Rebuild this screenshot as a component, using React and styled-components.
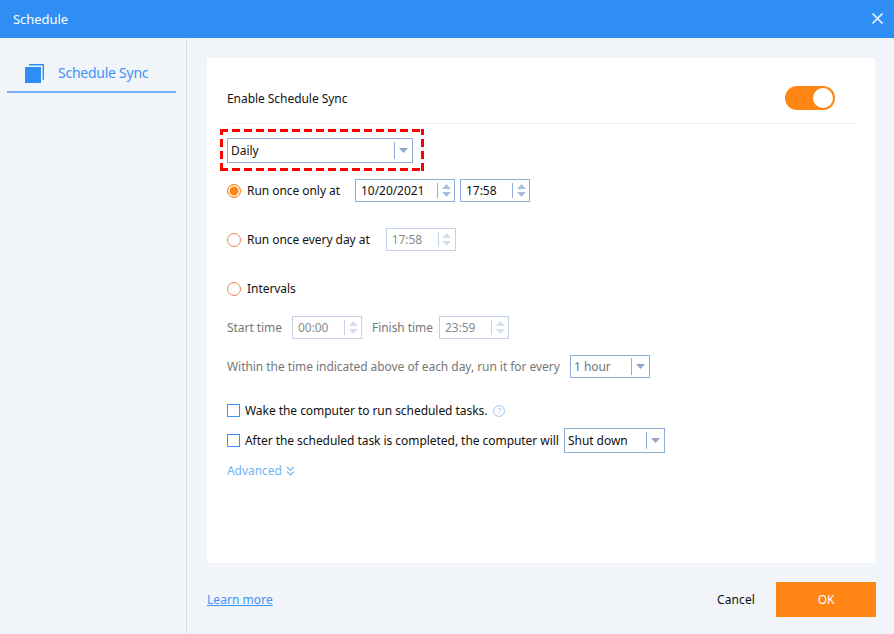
import React from "react";
import styled, { createGlobalStyle } from "styled-components";

const GlobalStyle = createGlobalStyle`
  html, body { margin: 0; padding: 0; background: #f1f4f9; }
  body { font-family: "Noto Sans", "Liberation Sans", sans-serif; font-size: 12px; letter-spacing: -0.05px; color: #111; }
`;

const Spin = ({ disabled }) => (
  <SpinBox $disabled={disabled}>
    <svg width="9" height="5" viewBox="0 0 9 5"><path d="M4.5 0L9 5H0z" fill="currentColor" /></svg>
    <svg width="9" height="5" viewBox="0 0 9 5"><path d="M0 0h9L4.5 5z" fill="currentColor" /></svg>
  </SpinBox>
);

const TimeInput = ({ value, width, disabled }) => (
  <InputBox $width={width} $disabled={disabled}>
    <InputValue>{value}</InputValue>
    <Spin disabled={disabled} />
  </InputBox>
);

const Select = ({ value, width, height }) => (
  <SelectBox $width={width} $height={height}>
    <InputValue>{value}</InputValue>
    <SelectArrow>
      <svg width="9" height="5" viewBox="0 0 9 5"><path d="M0 0h9L4.5 5z" fill="currentColor" /></svg>
    </SelectArrow>
  </SelectBox>
);

export default function App() {
  return (
    <>
      <GlobalStyle />
      <Window>
        <TitleBar>
          <Title>Schedule</Title>
          <svg width="11" height="11" viewBox="0 0 11 11">
            <path d="M0.5 0.5l10 10M10.5 0.5l-10 10" stroke="#d6ebff" strokeWidth="1.8" fill="none" />
          </svg>
        </TitleBar>
        <Body>
          <Sidebar>
            <Tab>
              <TabIcon width="19" height="19" viewBox="0 0 19 19">
                <path d="M4 0.7h14.3v15" stroke="#2f8ef4" strokeWidth="1.4" fill="none" />
                <rect x="0" y="3" width="16" height="16" fill="#2f8ef4" />
              </TabIcon>
              <TabLabel>Schedule Sync</TabLabel>
            </Tab>
          </Sidebar>
          <Main>
            <Panel>
              <EnableRow>
                <span>Enable Schedule Sync</span>
                <Toggle />
              </EnableRow>
              <Highlight>
                <Select value="Daily" width={186} height={25} />
              </Highlight>
              <RadioRow $mt={8}>
                <Radio $checked />
                <RadioLabel $mr={10}>Run once only at</RadioLabel>
                <TimeInput value="10/20/2021" width={100} />
                <TimeInput value="17:58" width={70} />
              </RadioRow>
              <RadioRow $mt={26}>
                <Radio />
                <RadioLabel $mr={11}>Run once every day at</RadioLabel>
                <TimeInput value="17:58" width={70} disabled />
              </RadioRow>
              <RadioRow $mt={26}>
                <Radio />
                <RadioLabel $mr={0}>Intervals</RadioLabel>
              </RadioRow>
              <MutedRow $mt={16}>
                <FixedLabel $width={55}>Start time</FixedLabel>
                <TimeInput value="00:00" width={70} disabled />
                <FixedLabel $width={57}>Finish time</FixedLabel>
                <TimeInput value="23:59" width={70} disabled />
              </MutedRow>
              <MutedRow $mt={16}>
                <FixedLabel $width={333}>Within the time indicated above of each day, run it for every</FixedLabel>
                <Select value="1 hour" width={80} height={23} />
              </MutedRow>
              <CheckRow $mt={20}>
                <Checkbox />
                <span>Wake the computer to run scheduled tasks.</span>
                <svg width="12" height="12" viewBox="0 0 12 12">
                  <circle cx="6" cy="6" r="5.4" stroke="#9fc6f0" fill="none" />
                  <text x="6" y="9" fontSize="8.5" textAnchor="middle" fill="#9fc6f0" fontFamily="Liberation Sans">?</text>
                </svg>
              </CheckRow>
              <CheckRow $mt={5}>
                <Checkbox />
                <FixedLabel $width={313}>After the scheduled task is completed, the computer will</FixedLabel>
                <Select value="Shut down" width={101} height={25} />
              </CheckRow>
              <Advanced>
                Advanced
                <svg width="9" height="10" viewBox="0 0 9 10">
                  <path d="M1 1l3.5 3.5L8 1M1 5.5L4.5 9 8 5.5" stroke="#75b2f6" strokeWidth="1.1" fill="none" />
                </svg>
              </Advanced>
            </Panel>
            <Footer>
              <LearnMore>Learn more</LearnMore>
              <Actions>
                <Cancel>Cancel</Cancel>
                <OkButton>OK</OkButton>
              </Actions>
            </Footer>
          </Main>
        </Body>
      </Window>
    </>
  );
}

const Window = styled.div`
  width: 894px;
  height: 634px;
  display: flex;
  flex-direction: column;
  overflow: hidden;
`;

const TitleBar = styled.div`
  height: 38px;
  box-sizing: border-box;
  background: #2f8ef4;
  display: flex;
  align-items: center;
  justify-content: space-between;
  padding: 0 11px 1px 13px;
  flex: none;
`;

const Title = styled.div`
  color: #fff;
  font-size: 13px;
`;

const Body = styled.div`
  flex: 1;
  display: flex;
`;

const Sidebar = styled.div`
  width: 169px;
  border-right: 1px solid #d9dde3;
  padding: 16px 10px 0 7px;
`;

const Tab = styled.div`
  height: 37px;
  border-bottom: 2px solid #75b0f5;
  display: flex;
  align-items: center;
  gap: 14px;
  padding-left: 18px;
`;

const TabIcon = styled.svg`
  margin-top: 2px;
  flex: none;
`;

const TabLabel = styled.span`
  color: #3f93f4;
  font-size: 14px;
  letter-spacing: -0.25px;
`;

const Main = styled.div`
  flex: 1;
  padding: 20px 18px 0 20px;
  display: flex;
  flex-direction: column;
`;

const Panel = styled.div`
  height: 505px;
  width: 668px;
  background: #fff;
  padding: 0 20px;
  box-sizing: border-box;
  display: flex;
  flex-direction: column;
  align-items: flex-start;
`;

const EnableRow = styled.div`
  align-self: stretch;
  height: 66px;
  flex: none;
  box-sizing: border-box;
  border-bottom: 1px solid #f1f2f4;
  display: flex;
  align-items: center;
  justify-content: space-between;
  padding: 15px 21px 0 0;
  margin-right: -1px;
`;

const Toggle = styled.div`
  width: 50px;
  height: 24px;
  border-radius: 12px;
  background: #ff8514;
  position: relative;
  &::after {
    content: "";
    position: absolute;
    right: 2px;
    top: 2px;
    width: 20px;
    height: 20px;
    border-radius: 50%;
    background: #fff;
  }
`;

const Highlight = styled.div`
  margin: 5px 0 0 -7px;
  padding: 9px 11px 8px 7px;
  background-color: #fff;
  background-image:
    repeating-linear-gradient(90deg, #f00 0 8px, transparent 8px 12px),
    repeating-linear-gradient(90deg, #f00 0 8px, transparent 8px 12px),
    repeating-linear-gradient(0deg, #f00 0 8px, transparent 8px 12px),
    repeating-linear-gradient(0deg, #f00 0 8px, transparent 8px 12px);
  background-size: 100% 3px, 100% 3px, 3px 100%, 3px 100%;
  background-position: 0 0, 0 100%, 0 0, 100% 0;
  background-repeat: no-repeat;
`;

const InputValue = styled.span`
  flex: 1;
  white-space: nowrap;
`;

const SelectBox = styled.div`
  width: ${(p) => p.$width}px;
  height: ${(p) => p.$height}px;
  box-sizing: border-box;
  border: 1px solid #8facd8;
  background: #fff;
  display: flex;
  align-items: center;
  padding-left: 3px;
`;

const SelectArrow = styled.div`
  width: 17px;
  height: 17px;
  border-left: 1px solid #8facd8;
  display: flex;
  align-items: center;
  justify-content: center;
  color: #8ea6cc;
`;

const InputBox = styled.div`
  width: ${(p) => p.$width}px;
  height: 23px;
  box-sizing: border-box;
  border: 1px solid ${(p) => (p.$disabled ? "#c3d2ea" : "#8facd8")};
  color: ${(p) => (p.$disabled ? "#8b8b8b" : "#111")};
  display: flex;
  align-items: center;
  padding-left: 5px;
`;

const SpinBox = styled.div`
  width: 16px;
  height: 15px;
  border-left: 1px solid ${(p) => (p.$disabled ? "#c3d2ea" : "#8facd8")};
  display: flex;
  flex-direction: column;
  align-items: center;
  justify-content: center;
  gap: 3px;
  color: ${(p) => (p.$disabled ? "#d3deef" : "#a9bcdb")};
`;

const RadioRow = styled.div`
  height: 23px;
  margin-top: ${(p) => p.$mt}px;
  display: flex;
  align-items: center;
  gap: 5px;
`;

const Radio = styled.span`
  width: 14px;
  height: 14px;
  box-sizing: border-box;
  border: 1px solid ${(p) => (p.$checked ? "#ff8514" : "#f2824a")};
  border-radius: 50%;
  background: ${(p) => (p.$checked ? "#ff8514" : "#fff")};
  box-shadow: ${(p) => (p.$checked ? "inset 0 0 0 1.5px #fff" : "none")};
`;

const RadioLabel = styled.span`
  margin: 0 ${(p) => p.$mr}px 0 1px;
`;

const MutedRow = styled.div`
  margin-top: ${(p) => p.$mt}px;
  display: flex;
  align-items: center;
  gap: 10px;
  color: #777;
`;

const FixedLabel = styled.span`
  width: ${(p) => p.$width}px;
  white-space: nowrap;
`;

const CheckRow = styled.div`
  margin-top: ${(p) => p.$mt}px;
  min-height: 25px;
  display: flex;
  align-items: center;
  gap: 6px;
`;

const Checkbox = styled.span`
  width: 11px;
  height: 11px;
  border: 1px solid #3f93f4;
  background: #fff;
  margin-right: -1px;
`;

const Advanced = styled.div`
  margin-top: 9px;
  color: #75b2f6;
  display: flex;
  align-items: center;
  gap: 4px;
`;

const Footer = styled.div`
  flex: 1;
  display: flex;
  align-items: flex-start;
  justify-content: space-between;
  padding-top: 19px;
`;

const LearnMore = styled.a`
  color: #3f93f4;
  text-decoration: underline;
  letter-spacing: 0.05px;
  margin-top: 9px;
`;

const Actions = styled.div`
  display: flex;
  align-items: center;
  gap: 21px;
`;

const Cancel = styled.span`
  color: #111;
  letter-spacing: 0.1px;
`;

const OkButton = styled.div`
  width: 100px;
  height: 35px;
  background: #ff8514;
  color: #fff;
  display: flex;
  align-items: center;
  justify-content: center;
`;
